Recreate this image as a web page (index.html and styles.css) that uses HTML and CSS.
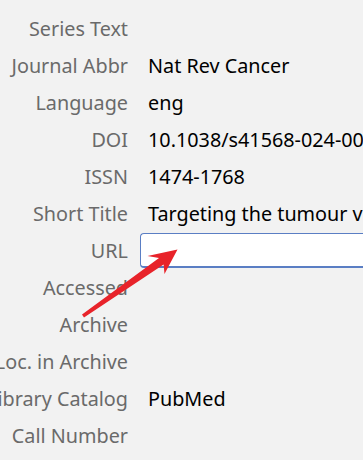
FILE: index.html
```html
<!DOCTYPE html>
<html>
<head>
<meta charset="utf-8">
<link rel="stylesheet" href="styles.css">
</head>
<body>
<div class="pane">
  <div class="fields">
    <div class="label"><span>Series Text</span></div><div class="value"></div>
    <div class="label"><span>Journal Abbr</span></div><div class="value">Nat Rev Cancer</div>
    <div class="label"><span>Language</span></div><div class="value">eng</div>
    <div class="label"><span>DOI</span></div><div class="value">10.1038/s41568-024-00712-3</div>
    <div class="label"><span>ISSN</span></div><div class="value">1474-1768</div>
    <div class="label"><span>Short Title</span></div><div class="value">Targeting the tumour vasculature</div>
    <div class="label"><span>URL</span></div><div class="value"><div class="input"></div></div>
    <div class="label"><span>Accessed</span></div><div class="value"></div>
    <div class="label"><span>Archive</span></div><div class="value"></div>
    <div class="label"><span>Loc. in Archive</span></div><div class="value"></div>
    <div class="label"><span>Library Catalog</span></div><div class="value">PubMed</div>
    <div class="label"><span>Call Number</span></div><div class="value"></div>
  </div>
  <svg class="arrow" width="363" height="460" viewBox="0 0 363 460">
    <polygon points="177.5,249.5 147.5,256 159,258 82,314.4 84,317.6 163.6,264.4 164.5,274" fill="#e8232a"/>
  </svg>
</div>
</body>
</html>
```
FILE: styles.css
```css
html, body {
  margin: 0;
  padding: 0;
  background: #f2f2f2;
  overflow: hidden;
}
.pane {
  position: relative;
  width: 363px;
  height: 460px;
  overflow: hidden;
  font-family: "Noto Sans", "Open Sans", sans-serif;
  font-size: 19.8px;
}
.fields {
  display: grid;
  grid-template-columns: 128px 1fr;
  grid-auto-rows: 37px;
  column-gap: 20px;
  padding-top: 10px;
}
.label {
  display: flex;
  justify-content: flex-end;
  align-items: center;
  white-space: nowrap;
  color: #6a6a6a;
  min-width: 0;
}
.value {
  display: flex;
  align-items: center;
  white-space: nowrap;
  color: #000;
  min-width: 0;
}
.input {
  margin-left: -8px;
  width: 260px;
  height: 32px;
  background: #fff;
  border: 1px solid #5a7ec4;
  border-bottom-width: 2px;
  border-right: none;
  border-radius: 4px 0 0 4px;
  flex-shrink: 0;
}
.arrow {
  position: absolute;
  left: 0;
  top: 0;
  pointer-events: none;
}
```
